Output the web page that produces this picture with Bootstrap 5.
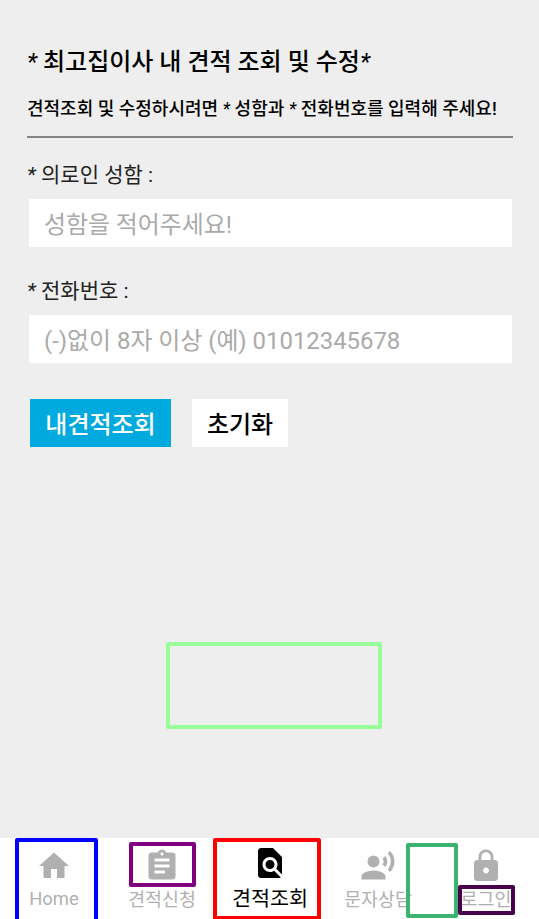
<!DOCTYPE html>
<html lang="ko">
<head>
<meta charset="utf-8">
<meta name="viewport" content="width=device-width, initial-scale=1">
<title>최고집이사 견적조회</title>
<link href="https://cdn.jsdelivr.net/npm/bootstrap@5.3.0/dist/css/bootstrap.min.css" rel="stylesheet">
<style>
body{background:#eee;font-family:Roboto,"Noto Sans CJK KR",sans-serif;color:#000;height:919px;overflow:hidden}
main{padding:44px 26px 0 27px}
h1{font-size:24px;line-height:36px;font-weight:500}
.intro{font-size:18px;line-height:28px;font-weight:500;margin-top:15px;padding-bottom:13px;border-bottom:2px solid #858585}
.star{font-style:italic;font-weight:400}
.field-label{font-size:21px;line-height:30px;color:#222;margin:22px 0 9px}
.field-label.second{margin:29px 0 9px}
.form-control.entry{height:48px;font-size:23.9px;line-height:36px;padding:8px 14px 4px 15px;width:483px;margin-left:2px}
.entry::placeholder{color:#aaa;opacity:1}
.actions{margin:36px 0 0 3px;gap:21px}
.action{height:48px;font-size:24px;line-height:36px;font-weight:500;padding:8px 0 4px}
.lookup{width:141px;background:#00a9de;color:#fff}
.reset{width:96px;background:#fff;color:#000}
.tabs{height:81px;width:540px;color:#b0b0b0}
.tab{width:108px;padding-top:10px;color:inherit;font-size:18.4px;line-height:28px}
.tab svg{width:36px;height:36px;fill:currentColor}
.tab span{margin-top:2px;white-space:nowrap}
.tab.home span{margin-top:1px}
.tab.current{color:#000;font-size:20.7px;padding-top:7px}
.tab.current span{margin-top:4px}
.frame{position:absolute;border:4px solid;border-radius:2px;pointer-events:none}
.f-mint{left:166px;top:642px;width:216px;height:87px;border-color:#98ff98}
.f-blue{left:15px;top:838px;width:83px;height:90px;border-color:#00f}
.f-purple{left:129px;top:842px;width:67px;height:45px;border-color:#800080}
.f-red{left:213px;top:838px;width:108px;height:82px;border-color:#f00}
.f-green{left:406px;top:843px;width:52px;height:75px;border-color:#3cb371}
.f-plum{left:458px;top:885px;width:57px;height:30px;border-color:#4b004b}
</style>
<script src="https://cdn.jsdelivr.net/npm/bootstrap@5.3.0/dist/js/bootstrap.bundle.min.js"></script>
</head>
<body class="position-relative d-flex flex-column">
<main class="flex-grow-1">
  <h1 class="m-0 text-nowrap"><span class="star">*</span> 최고집이사 내 견적 조회 및 수정<span class="star">*</span></h1>
  <p class="intro mb-0 text-nowrap">견적조회 및 수정하시려면 <span class="star">*</span> 성함과 <span class="star">*</span> 전화번호를 입력해 주세요!</p>
  <form>
    <label for="name" class="field-label d-block"><span class="star">*</span> 의로인 성함 :</label>
    <input id="name" class="form-control entry border-0 rounded-0" placeholder="성함을 적어주세요!">
    <label for="phone" class="field-label d-block second"><span class="star">*</span> 전화번호 :</label>
    <input id="phone" class="form-control entry border-0 rounded-0" placeholder="(-)없이 8자 이상 (예) 01012345678">
    <div class="d-flex actions">
      <button type="button" class="btn action lookup border-0 rounded-0">내견적조회</button>
      <button type="reset" class="btn action reset border-0 rounded-0">초기화</button>
    </div>
  </form>
</main>
<nav class="tabs d-flex flex-shrink-0 bg-white">
  <a class="tab home d-flex flex-column align-items-center text-decoration-none"><svg viewBox="0 0 24 24"><path d="M10 20v-6h4v6h5v-8h3L12 3 2 12h3v8z"/></svg><span>Home</span></a>
  <a class="tab d-flex flex-column align-items-center text-decoration-none"><svg viewBox="0 0 24 24"><path d="M19 3h-4.180C14.400 1.840 13.300 1 12 1s-2.400.840-2.820 2H5c-1.100 0-2 .9-2 2v14c0 1.100.9 2 2 2h14c1.100 0 2-.9 2-2V5c0-1.100-.9-2-2-2zm-7 0c.550 0 1 .450 1 1s-.450 1-1 1-1-.450-1-1 .450-1 1-1zm2 14H7v-2h7v2zm3-4H7v-2h10v2zm0-4H7V7h10v2z"/></svg><span>견적신청</span></a>
  <a class="tab current d-flex flex-column align-items-center text-decoration-none"><svg viewBox="0 0 24 24"><path d="M20 19.590V8l-6-6H6c-1.100 0-1.990.9-1.990 2L4 20c0 1.100.890 2 1.990 2H18c.450 0 .850-.150 1.190-.4l-4.430-4.430c-.8.520-1.740.830-2.760.830-2.760 0-5-2.240-5-5s2.240-5 5-5 5 2.240 5 5c0 1.020-.310 1.960-.830 2.750L20 19.590zM9 13c0 1.660 1.340 3 3 3s3-1.340 3-3-1.340-3-3-3-3 1.340-3 3z"/></svg><span>견적조회</span></a>
  <a class="tab d-flex flex-column align-items-center text-decoration-none"><svg viewBox="0 0 24 24"><circle cx="9" cy="9" r="4"/><path d="M9 15c-2.670 0-8 1.340-8 4v2h16v-2c0-2.660-5.330-4-8-4zm7.760-9.640l-1.680 1.690c.840 1.180.840 2.710 0 3.890l1.680 1.690c2.020-2.020 2.020-5.070 0-7.270zM20.070 2l-1.630 1.630c2.770 3.020 2.770 7.560 0 10.740L20.070 16c3.900-3.890 3.910-9.950 0-14z"/></svg><span>문자상담</span></a>
  <a class="tab d-flex flex-column align-items-center text-decoration-none"><svg viewBox="0 0 24 24"><path d="M18 8h-1V6c0-2.760-2.240-5-5-5S7 3.240 7 6v2H6c-1.100 0-2 .9-2 2v10c0 1.100.9 2 2 2h12c1.100 0 2-.9 2-2V10c0-1.100-.9-2-2-2zm-6 9c-1.100 0-2-.9-2-2s.9-2 2-2 2 .9 2 2-.9 2-2 2zm3.100-9H8.900V6c0-1.710 1.390-3.100 3.100-3.100s3.100 1.390 3.100 3.100v2z"/></svg><span>로그인</span></a>
</nav>
<div class="frame f-mint"></div>
<div class="frame f-blue"></div>
<div class="frame f-purple"></div>
<div class="frame f-red"></div>
<div class="frame f-green"></div>
<div class="frame f-plum"></div>
</body>
</html>
